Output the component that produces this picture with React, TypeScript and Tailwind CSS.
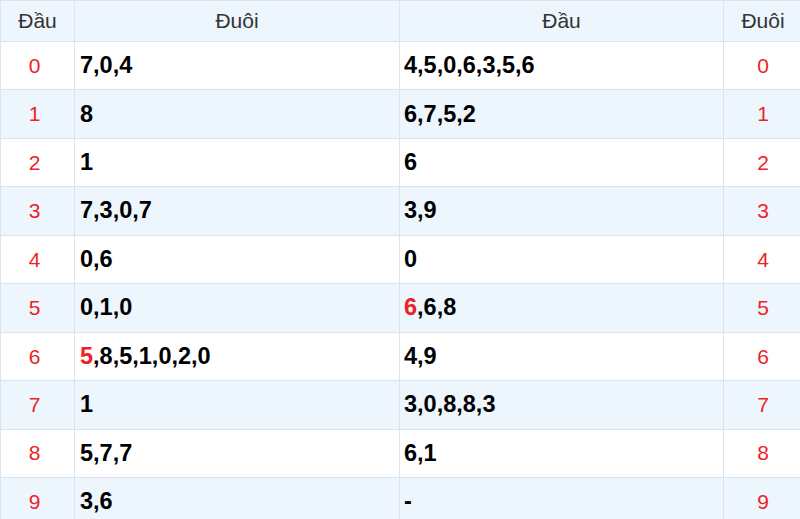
import React from 'react';

type Row = { head: string; tail: React.ReactNode; head2: React.ReactNode; tail2: string };

const Hot: React.FC<{ children: React.ReactNode }> = ({ children }) => (
    <span className="text-[#ee1f27]">{children}</span>
);

const rows: Row[] = [
    { head: '0', tail: '7,0,4', head2: '4,5,0,6,3,5,6', tail2: '0' },
    { head: '1', tail: '8', head2: '6,7,5,2', tail2: '1' },
    { head: '2', tail: '1', head2: '6', tail2: '2' },
    { head: '3', tail: '7,3,0,7', head2: '3,9', tail2: '3' },
    { head: '4', tail: '0,6', head2: '0', tail2: '4' },
    { head: '5', tail: '0,1,0', head2: <><Hot>6</Hot>,6,8</>, tail2: '5' },
    { head: '6', tail: <><Hot>5</Hot>,8,5,1,0,2,0</>, head2: '4,9', tail2: '6' },
    { head: '7', tail: '1', head2: '3,0,8,8,3', tail2: '7' },
    { head: '8', tail: '5,7,7', head2: '6,1', tail2: '8' },
    { head: '9', tail: '3,6', head2: '-', tail2: '9' },
];

export default function App() {
    return (
        <div className="w-[800px] h-[519px] overflow-hidden bg-white font-['Liberation_Sans',Arial,sans-serif]">
            <table className="w-[802px] border-collapse table-fixed">
                <colgroup>
                    <col className="w-[74px]" />
                    <col className="w-[325px]" />
                    <col className="w-[324px]" />
                    <col className="w-[79px]" />
                </colgroup>
                <thead>
                    <tr className="h-[41px] bg-[#edf5fd] text-[21px] text-[#333]">
                        <th className="border border-[#dde3ea] font-normal text-center">Đầu</th>
                        <th className="border border-[#dde3ea] font-normal text-center">Đuôi</th>
                        <th className="border border-[#dde3ea] font-normal text-center">Đầu</th>
                        <th className="border border-[#dde3ea] font-normal text-center">Đuôi</th>
                    </tr>
                </thead>
                <tbody>
                    {rows.map((r, i) => (
                        <tr key={r.head} className={`h-[48.44px] ${i % 2 ? 'bg-[#edf5fd]' : 'bg-white'}`}>
                            <td className="border border-[#dde3ea] pr-[6px] text-center text-[21px] text-[#ee1f27]">{r.head}</td>
                            <td className="border border-[#dde3ea] pl-[5px] text-[23.5px] font-bold text-black">{r.tail}</td>
                            <td className="border border-[#dde3ea] pl-[4px] text-[23.5px] font-bold text-black">{r.head2}</td>
                            <td className="border border-[#dde3ea] text-center text-[21px] text-[#ee1f27]">{r.tail2}</td>
                        </tr>
                    ))}
                </tbody>
            </table>
        </div>
    );
}
